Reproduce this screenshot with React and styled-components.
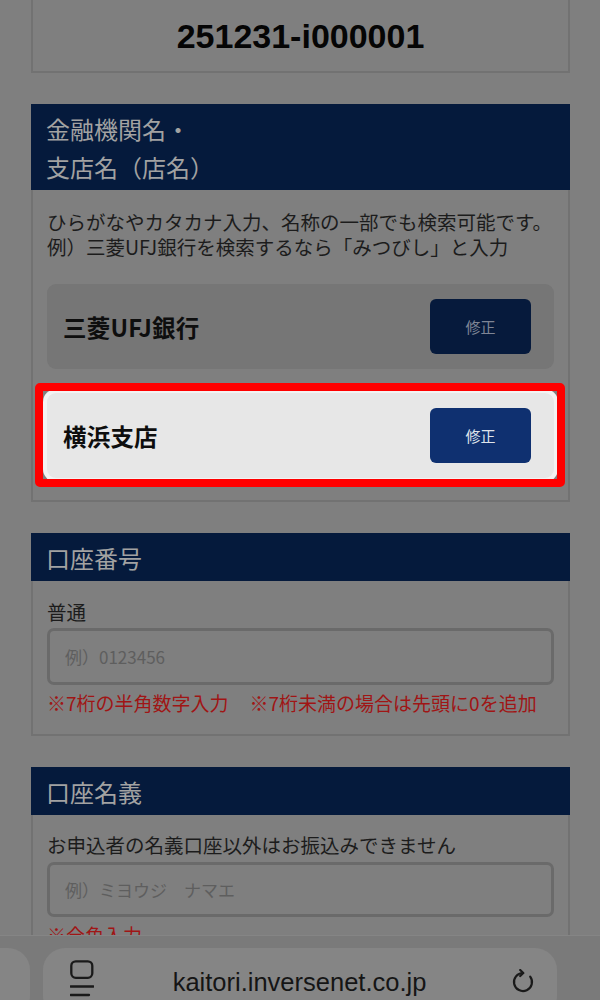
import React from 'react';
import styled, { createGlobalStyle } from 'styled-components';

const GlobalStyle = createGlobalStyle`
  html, body {
    margin: 0;
    padding: 0;
    background: #7f7f7f;
  }
  body {
    font-family: "Noto Sans CJK JP", "Liberation Sans", sans-serif;
    overflow: hidden;
  }
  * {
    box-sizing: border-box;
  }
`;

const Page = styled.div`
  display: flex;
  flex-direction: column;
  gap: 31px;
  padding: 0 30px 140px 31px;
`;

const OrderCard = styled.div`
  height: 73px;
  border: 2px solid #727272;
  border-top: none;
  display: flex;
  align-items: center;
  justify-content: center;
  padding-top: 1px;
  font-family: "Liberation Sans", Arial, sans-serif;
  font-weight: 700;
  font-size: 34px;
  line-height: 1;
  color: #050505;
`;

const SectionHeader = styled.h2`
  margin: 0;
  background: #051a3c;
  color: #a2a2a2;
  font-size: 24px;
  font-weight: 400;
  line-height: 38px;
  padding: 6px 15px 4px;
`;

const SectionBody = styled.div`
  border: 2px solid #727272;
  border-top: none;
  padding: ${(p) => p.$pad};
  display: flex;
  flex-direction: column;
`;

const Text = styled.p`
  margin: ${(p) => p.$margin || '0'};
  font-size: 19.5px;
  line-height: ${(p) => p.$lh || '26px'};
  color: #1c1c1c;
  white-space: nowrap;
`;

const BankRow = styled.div`
  position: relative;
  height: 85px;
  margin-top: ${(p) => p.$mt}px;
  border-radius: 9px;
  background: ${(p) => (p.$active ? '#e7e7e7' : '#767676')};
  display: flex;
  align-items: center;
  justify-content: space-between;
  padding: 0 23px 0 16px;
  ${(p) =>
    p.$active &&
    `
    box-shadow: 0 0 0 4px #f3f3f3;
    &::after {
      content: '';
      position: absolute;
      top: -10px;
      left: -12px;
      right: -11px;
      bottom: -9px;
      border: 8px solid #ff0000;
      border-radius: 5px;
      pointer-events: none;
    }
  `}
`;

const BankName = styled.span`
  font-size: 23.5px;
  font-weight: 700;
  color: #0e0e0e;
  letter-spacing: 0.2px;
`;

const EditButton = styled.button`
  width: 101px;
  height: 55px;
  border: none;
  border-radius: 6px;
  background: ${(p) => (p.$active ? '#0f3070' : '#061a3c')};
  color: ${(p) => (p.$active ? '#dfe3ea' : '#7e8595')};
  font-family: "Noto Sans CJK JP", sans-serif;
  font-size: 15px;
  padding: 0;
`;

const Field = styled.input`
  height: ${(p) => p.$h}px;
  margin-top: ${(p) => p.$mt}px;
  width: 100%;
  border: 3px solid #6a6a6a;
  border-radius: 7px;
  background: #7f7f7f;
  padding: 0 15px;
  font-family: "Noto Sans CJK JP", sans-serif;
  font-size: 17px;
  outline: none;
  &::placeholder {
    color: #5e5e5e;
  }
`;

const Notes = styled.div`
  display: flex;
  gap: 21px;
  margin-top: 5px;
  font-size: 19px;
  line-height: 26px;
  color: #a01515;
  white-space: nowrap;
`;

const BrowserBar = styled.div`
  position: fixed;
  left: 0;
  right: 0;
  bottom: 0;
  height: 65px;
  background: #7a7a7a;
  border-top: 1px solid #858585;
  display: flex;
  gap: 13px;
  padding-top: 12px;
  overflow: hidden;
`;

const TabPill = styled.div`
  flex: none;
  width: ${(p) => p.$w}px;
  margin-left: ${(p) => p.$ml || 0}px;
  height: 70px;
  border-radius: 22px;
  background: #858585;
  display: flex;
  align-items: center;
  padding: 0 22px 0 27px;
`;

const Url = styled.span`
  flex: 1;
  text-align: center;
  font-family: "Liberation Sans", Arial, sans-serif;
  font-size: 25.5px;
  color: #151515;
  margin-bottom: 1px;
  padding-right: 6px;
`;

const ReaderIcon = () => (
  <svg width="24" height="38" viewBox="0 0 24 38" style={{ alignSelf: 'flex-start', marginTop: 12, flex: 'none' }}>
    <rect x="1.3" y="1.3" width="21" height="16.5" rx="4.5" fill="none" stroke="#1a1a1a" strokeWidth="2.3" />
    <line x1="0.5" y1="26.5" x2="23.5" y2="26.5" stroke="#1a1a1a" strokeWidth="2.3" strokeLinecap="round" />
    <line x1="0.5" y1="35" x2="19" y2="35" stroke="#1a1a1a" strokeWidth="2.3" strokeLinecap="round" />
  </svg>
);

const ReloadIcon = () => (
  <svg width="24" height="26" viewBox="0 0 24 26" style={{ flex: 'none', marginBottom: 3 }}>
    <path d="M12 4 A9 9 0 1 0 19.2 7.6" fill="none" stroke="#1a1a1a" strokeWidth="2.2" strokeLinecap="round" />
    <path d="M9.2 1 L12.3 4 L9.2 7" fill="none" stroke="#1a1a1a" strokeWidth="2.2" strokeLinecap="round" strokeLinejoin="round" />
  </svg>
);

export default function App() {
  return (
    <>
      <GlobalStyle />
      <Page>
        <OrderCard>251231-i000001</OrderCard>

        <section>
          <SectionHeader>
            金融機関名・
            <br />
            支店名（店名）
          </SectionHeader>
          <SectionBody $pad="20px 14px 22px">
            <Text $lh="24.5px">
              ひらがなやカタカナ入力、名称の一部でも検索可能です。
              <br />
              例）三菱UFJ銀行を検索するなら「みつびし」と入力
            </Text>
            <BankRow $mt={25}>
              <BankName>三菱UFJ銀行</BankName>
              <EditButton>修正</EditButton>
            </BankRow>
            <BankRow $mt={24} $active>
              <BankName>横浜支店</BankName>
              <EditButton $active>修正</EditButton>
            </BankRow>
          </SectionBody>
        </section>

        <section>
          <SectionHeader>口座番号</SectionHeader>
          <SectionBody $pad="18px 14px 18px">
            <Text>普通</Text>
            <Field $h={57} $mt={3} placeholder="例）0123456" readOnly />
            <Notes>
              <span>※7桁の半角数字入力</span>
              <span>※7桁未満の場合は先頭に0を追加</span>
            </Notes>
          </SectionBody>
        </section>

        <section>
          <SectionHeader>口座名義</SectionHeader>
          <SectionBody $pad="17px 14px 24px">
            <Text>お申込者の名義口座以外はお振込みできません</Text>
            <Field $h={55} $mt={4} placeholder="例）ミヨウジ　ナマエ" readOnly />
            <Notes>
              <span>※全角入力</span>
            </Notes>
          </SectionBody>
        </section>
      </Page>

      <BrowserBar>
        <TabPill $w={60} $ml={-30} />
        <TabPill $w={514}>
          <ReaderIcon />
          <Url>kaitori.inversenet.co.jp</Url>
          <ReloadIcon />
        </TabPill>
      </BrowserBar>
    </>
  );
}
